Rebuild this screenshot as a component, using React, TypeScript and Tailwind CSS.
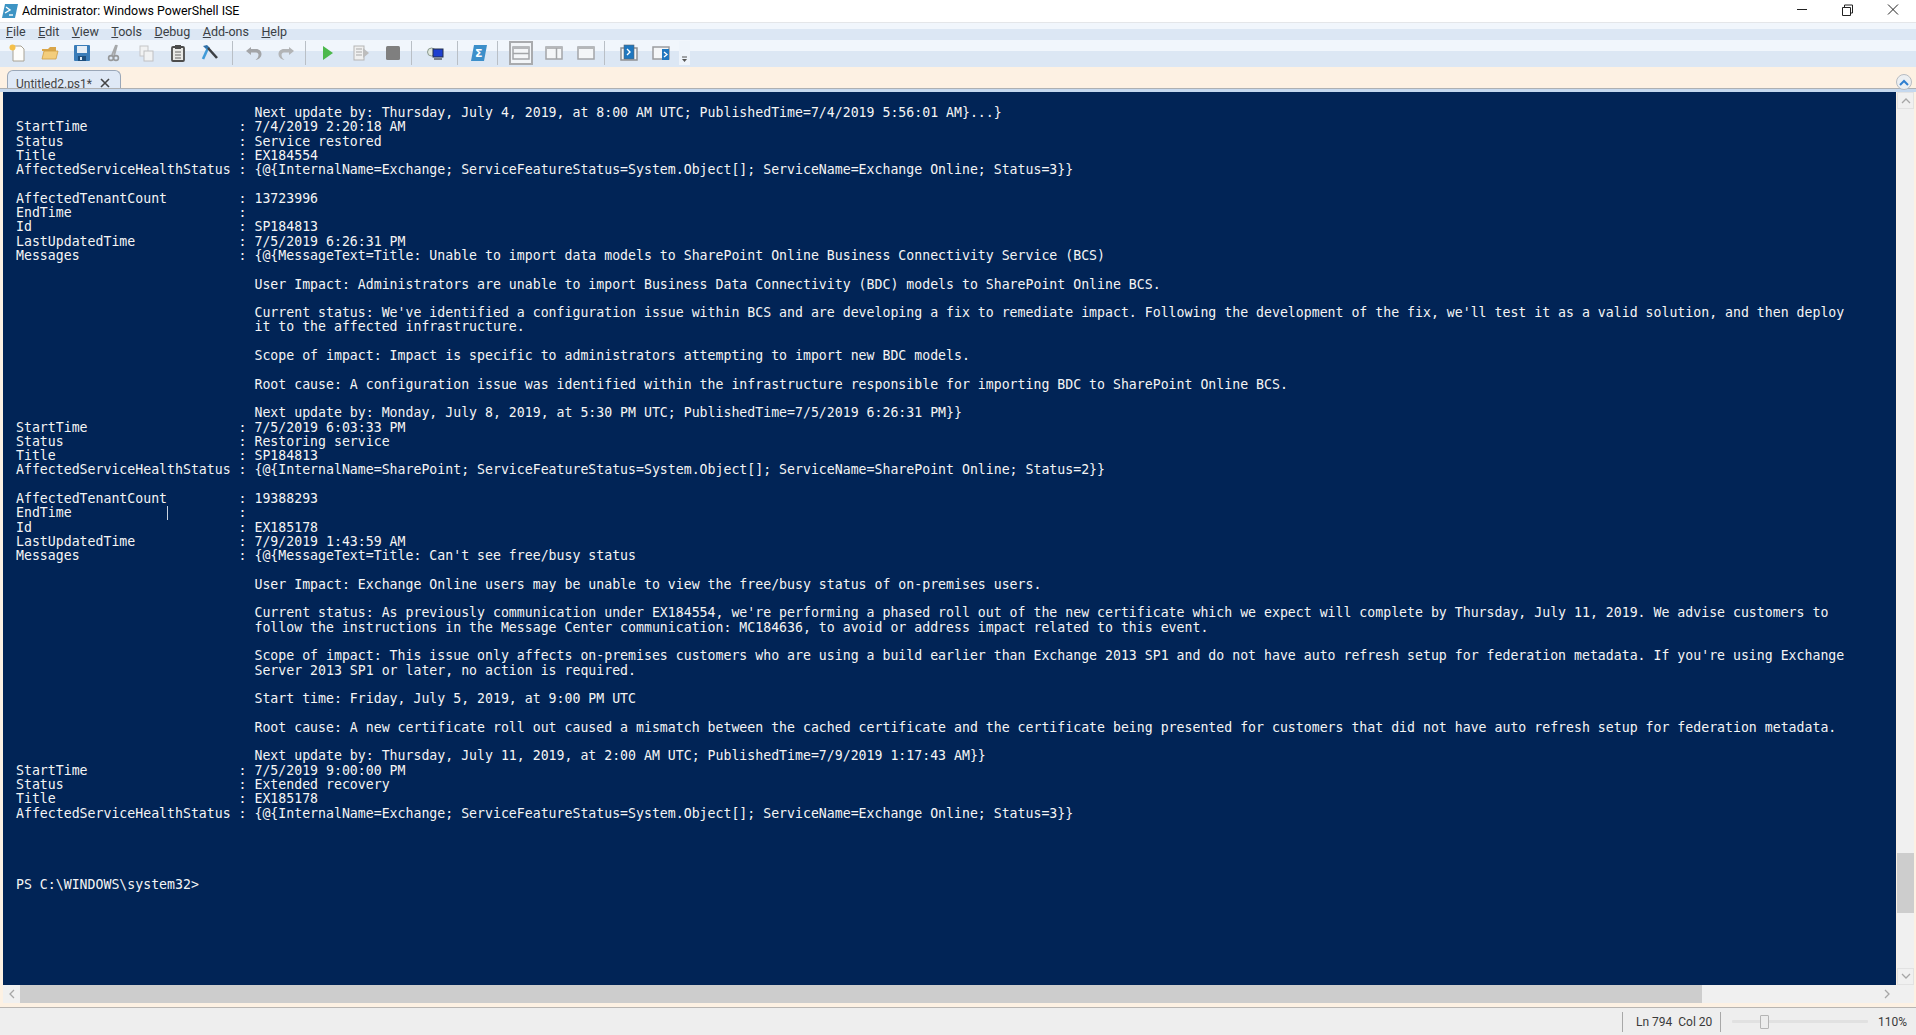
import React from "react";

const consoleText = `                              Next update by: Thursday, July 4, 2019, at 8:00 AM UTC; PublishedTime=7/4/2019 5:56:01 AM}...}
StartTime                   : 7/4/2019 2:20:18 AM
Status                      : Service restored
Title                       : EX184554
AffectedServiceHealthStatus : {@{InternalName=Exchange; ServiceFeatureStatus=System.Object[]; ServiceName=Exchange Online; Status=3}}

AffectedTenantCount         : 13723996
EndTime                     :
Id                          : SP184813
LastUpdatedTime             : 7/5/2019 6:26:31 PM
Messages                    : {@{MessageText=Title: Unable to import data models to SharePoint Online Business Connectivity Service (BCS)

                              User Impact: Administrators are unable to import Business Data Connectivity (BDC) models to SharePoint Online BCS.

                              Current status: We've identified a configuration issue within BCS and are developing a fix to remediate impact. Following the development of the fix, we'll test it as a valid solution, and then deploy
                              it to the affected infrastructure.

                              Scope of impact: Impact is specific to administrators attempting to import new BDC models.

                              Root cause: A configuration issue was identified within the infrastructure responsible for importing BDC to SharePoint Online BCS.

                              Next update by: Monday, July 8, 2019, at 5:30 PM UTC; PublishedTime=7/5/2019 6:26:31 PM}}
StartTime                   : 7/5/2019 6:03:33 PM
Status                      : Restoring service
Title                       : SP184813
AffectedServiceHealthStatus : {@{InternalName=SharePoint; ServiceFeatureStatus=System.Object[]; ServiceName=SharePoint Online; Status=2}}

AffectedTenantCount         : 19388293
EndTime                     :
Id                          : EX185178
LastUpdatedTime             : 7/9/2019 1:43:59 AM
Messages                    : {@{MessageText=Title: Can't see free/busy status

                              User Impact: Exchange Online users may be unable to view the free/busy status of on-premises users.

                              Current status: As previously communication under EX184554, we're performing a phased roll out of the new certificate which we expect will complete by Thursday, July 11, 2019. We advise customers to
                              follow the instructions in the Message Center communication: MC184636, to avoid or address impact related to this event.

                              Scope of impact: This issue only affects on-premises customers who are using a build earlier than Exchange 2013 SP1 and do not have auto refresh setup for federation metadata. If you're using Exchange
                              Server 2013 SP1 or later, no action is required.

                              Start time: Friday, July 5, 2019, at 9:00 PM UTC

                              Root cause: A new certificate roll out caused a mismatch between the cached certificate and the certificate being presented for customers that did not have auto refresh setup for federation metadata.

                              Next update by: Thursday, July 11, 2019, at 2:00 AM UTC; PublishedTime=7/9/2019 1:17:43 AM}}
StartTime                   : 7/5/2019 9:00:00 PM
Status                      : Extended recovery
Title                       : EX185178
AffectedServiceHealthStatus : {@{InternalName=Exchange; ServiceFeatureStatus=System.Object[]; ServiceName=Exchange Online; Status=3}}




PS C:\\WINDOWS\\system32>`;

const Slot = ({ w = 32, children }: { w?: number; children?: React.ReactNode }) => (
  <div className="flex h-full shrink-0 items-center justify-center" style={{ width: w }}>
    {children}
  </div>
);
const Sep = () => <div className="h-[24px] w-px shrink-0 bg-[#b9bfc6]" />;

const Ico = ({ children, size = 20 }: { children: React.ReactNode; size?: number }) => (
  <svg width={size} height={size} viewBox="0 0 20 20">{children}</svg>
);

const Win = ({ children }: { children?: React.ReactNode }) => (
  <Ico size={20}>
    <rect x="2" y="4" width="16" height="12" fill="#f4f6f8" stroke="#a3a5a8" strokeWidth="1.5" />
    <rect x="2" y="4" width="16" height="2" fill="#b5b7ba" />
    {children}
  </Ico>
);

function Toolbar() {
  return (
    <div className="flex h-[25px] items-center pl-[2px]">
      <Slot><Ico>
        <path d="M5 3h8l3 3v12H5z" fill="#fdfdfb" stroke="#a8a294" />
        <circle cx="4.5" cy="4.5" r="3" fill="#f5c04a" />
      </Ico></Slot>
      <Slot><Ico>
        <path d="M2 6h6l2-2h6v4H2z" fill="#d9a64a" />
        <path d="M2 16l2-8h14l-2 8z" fill="#f3cd7c" stroke="#cf9e45" strokeWidth="0.8" />
      </Ico></Slot>
      <Slot><Ico>
        <rect x="2" y="2" width="16" height="16" rx="1" fill="#3a7cb8" />
        <rect x="5" y="3" width="10" height="7" fill="#e6eef6" />
        <rect x="6" y="13" width="8" height="5" fill="#1d4f7e" />
        <rect x="8" y="14" width="2" height="3" fill="#dfe9f3" />
      </Ico></Slot>
      <Slot><Ico>
        <path d="M12 2L8 12M10 13l3-11" stroke="#a6a8aa" strokeWidth="1.8" fill="none" />
        <circle cx="7" cy="15" r="2.4" fill="none" stroke="#96989a" strokeWidth="1.6" />
        <circle cx="12" cy="15" r="2.4" fill="none" stroke="#96989a" strokeWidth="1.6" />
      </Ico></Slot>
      <Slot><Ico>
        <rect x="4" y="3" width="8" height="10" fill="#f1f2f3" stroke="#c5c6c8" />
        <rect x="8" y="8" width="9" height="10" fill="#f1f2f3" stroke="#bfc0c2" />
      </Ico></Slot>
      <Slot><Ico>
        <rect x="4" y="4" width="12" height="14" rx="1" fill="#e9e9e6" stroke="#4c4c4c" strokeWidth="1.8" />
        <rect x="7" y="2" width="6" height="4" fill="#4c4c4c" />
        <path d="M7 9h6M7 12h6M7 15h6" stroke="#666" />
      </Ico></Slot>
      <Slot><Ico>
        <path d="M3 3l4-1 3 3-3 2z" fill="#2f6fa8" />
        <path d="M8 5L3 16" stroke="#3f9ad8" strokeWidth="2.6" />
        <path d="M8 5l9 10" stroke="#3b3f44" strokeWidth="2.6" />
      </Ico></Slot>
      <div className="w-[4px]" />
      <Slot w={5}><Sep /></Slot>
      <div className="w-[3px]" />
      <Slot><Ico>
        <path d="M7 4L2 8l5 4V9.500h5c2 0 2.500 1.500 2.500 2.500 0 2-1.500 4-3 5 3.500-.5 6-3 6-6 0-2.500-2-5-5.500-5H7z" fill="#a3a5a8" />
      </Ico></Slot>
      <Slot><Ico>
        <path d="M13 4l5 4-5 4V9.500H8c-2 0-2.500 1.500-2.500 2.500 0 2 1.500 4 3 5-3.500-.5-6-3-6-6 0-2.500 2-5 5.500-5h5z" fill="#b2b4b6" />
      </Ico></Slot>
      <div className="w-[1px]" />
      <Slot w={5}><Sep /></Slot>
      <div className="w-[3px]" />
      <Slot w={33}><Ico><path d="M5 3l10 7-10 7z" fill="#4cb84c" /></Ico></Slot>
      <Slot w={33}><Ico>
        <rect x="3" y="3" width="10" height="14" fill="#f0f0f0" stroke="#b5b5b5" />
        <path d="M5 6h6M5 9h6M5 12h6" stroke="#a9a9a9" />
        <path d="M12 5l6 5-6 5z" fill="#bdbdbd" />
      </Ico></Slot>
      <Slot w={32}><Ico><rect x="3" y="3" width="14" height="14" rx="1.500" fill="#7f7f7f" /></Ico></Slot>
      <Slot w={5}><Sep /></Slot>
      <div className="w-[3px]" />
      <Slot w={35}><Ico>
        <circle cx="6.500" cy="9" r="4" fill="#dfe7dd" stroke="#8b9a90" />
        <rect x="8" y="6" width="10" height="8" fill="#1d3fd0" stroke="#22304d" />
        <path d="M9 16h8" stroke="#585f6a" strokeWidth="1.500" />
      </Ico></Slot>
      <div className="w-[3px]" />
      <Slot w={5}><Sep /></Slot>
      <div className="w-[3px]" />
      <Slot w={32}><Ico>
        <path d="M5 2h13l-3 16H2z" fill="#3c8fca" />
        <text x="6" y="14" fontSize="11" fontWeight="700" fill="#fff" fontFamily="DejaVu Sans">Σ</text>
      </Ico></Slot>
      <Slot w={5}><Sep /></Slot>
      <div className="w-[9px]" />
      <div className="flex h-[24px] w-[24px] shrink-0 items-center justify-center border-2 border-[#a9abae] bg-[#f2f5f8]">
        <Win><path d="M2 10.500h16" stroke="#a3a5a8" strokeWidth="1.500" /></Win>
      </div>
      <div className="w-[5px]" />
      <Slot w={32}><Win><path d="M12.500 5v11" stroke="#a3a5a8" strokeWidth="1.500" /></Win></Slot>
      <Slot w={32}><Win /></Slot>
      <Slot w={5}><Sep /></Slot>
      <div className="w-[5px]" />
      <Slot w={33}><Ico>
        <rect x="2" y="5" width="16" height="12" fill="#f4f6f8" stroke="#8f9194" strokeWidth="1.500" />
        <rect x="5" y="2" width="10" height="14" fill="#1f77bf" stroke="#5d6670" strokeWidth="0.600" />
        <path d="M8 6l3 3-3 3" stroke="#fff" strokeWidth="1.400" fill="none" />
      </Ico></Slot>
      <Slot w={32}><Ico>
        <rect x="2" y="4" width="16" height="12" fill="#f4f6f8" stroke="#9a9c9f" strokeWidth="1.500" />
        <rect x="11" y="6" width="7" height="11" fill="#1f77bf" />
        <path d="M13 9l3 2.500-3 2.500" stroke="#fff" strokeWidth="1.300" fill="none" />
      </Ico></Slot>
      <div className="w-[2px]" />
      <div className="flex h-[24px] w-[11px] shrink-0 items-end justify-center bg-[#eef4fb] pb-[2px]">
        <svg width="7" height="7" viewBox="0 0 7 7"><path d="M1 1h5" stroke="#555" /><path d="M1 3h5L3.500 6z" fill="#555" /></svg>
      </div>
    </div>
  );
}

export default function App() {
  return (
    <div className="flex h-[1035px] w-[1916px] flex-col overflow-hidden bg-white font-['Roboto','Open_Sans',sans-serif] text-black">
      {/* Title bar */}
      <div className="flex h-[22px] shrink-0 items-center bg-white pl-[2px]">
        <svg width="16" height="16" viewBox="0 0 16 16" className="mr-[4px]">
          <path d="M3 1h13l-3 14H0z" fill="#3d94c4" />
          <path d="M4 4l4 3-5 3" stroke="#fff" strokeWidth="1.400" fill="none" />
          <path d="M7 12h4" stroke="#fff" strokeWidth="1.400" />
        </svg>
        <span className="text-[12.400px] leading-none">Administrator: Windows PowerShell ISE</span>
        <div className="ml-auto flex h-full items-center">
          <svg width="46" height="22" viewBox="0 0 46 22" className="translate-x-[2px]"><path d="M18 9.500h10" stroke="#222" /></svg>
          <svg width="46" height="22" viewBox="0 0 46 22" className="mr-[1px]">
            <path d="M19.500 7.500h8v8h-8z M21.500 7.500v-2.500h8v8h-2" stroke="#222" fill="none" />
          </svg>
          <svg width="46" height="22" viewBox="0 0 46 22"><path d="M18 4.500l10 10M28 4.500l-10 10" stroke="#222" /></svg>
        </div>
      </div>

      {/* Menu */}
      <div className="flex h-[18px] shrink-0 items-center gap-[12.500px] border-t border-t-[#e4e6e9] bg-[linear-gradient(#f1f6fc_0,#f1f6fc_6px,#dce7f4_6px,#dce7f4_100%)] pl-[6px] pt-[2px] text-[12.500px] leading-none text-[#3a3f45]">
        <span><u className="decoration-[0.5px] underline-offset-1">F</u>ile</span>
        <span><u className="decoration-[0.5px] underline-offset-1">E</u>dit</span>
        <span><u className="decoration-[0.5px] underline-offset-1">V</u>iew</span>
        <span><u className="decoration-[0.5px] underline-offset-1">T</u>ools</span>
        <span><u className="decoration-[0.5px] underline-offset-1">D</u>ebug</span>
        <span><u className="decoration-[0.5px] underline-offset-1">A</u>dd-ons</span>
        <span><u className="decoration-[0.5px] underline-offset-1">H</u>elp</span>
      </div>

      {/* Toolbar */}
      <div className="flex h-[27px] shrink-0 flex-col bg-[linear-gradient(#f1f6fc_0,#f1f6fc_11px,#dce7f4_11px,#dce7f4_100%)]">
        <Toolbar />
      </div>

      {/* Tab strip */}
      <div className="relative flex h-[21px] shrink-0 items-end bg-[#fdf1e3] pl-[7px]">
        <div className="flex h-[18px] w-[114px] items-start gap-[8px] overflow-hidden rounded-t-[6px] border border-b-0 border-[#9aa7b8] bg-[#dfe9f6] pl-[8px] pt-[4px] text-[12px] leading-[18px] text-[#444]">
          <span>Untitled2.ps1*</span>
          <svg width="10" height="10" viewBox="0 0 10 10" className="mt-[3px] shrink-0"><path d="M1 1l8 8M9 1l-8 8" stroke="#444" strokeWidth="1.600" /></svg>
        </div>
        <div className="absolute bottom-[-2px] right-[4px] flex h-[16px] w-[16px] items-center justify-center rounded-full border border-[#b7bcc2] bg-[#eceff2]">
          <svg width="10" height="7" viewBox="0 0 10 7"><path d="M1 6l4-4 4 4" stroke="#2f7fd0" strokeWidth="2" fill="none" /></svg>
        </div>
      </div>

      {/* Editor + console */}
      <div className="flex min-h-0 flex-1 flex-col border-t border-t-[#aeb0b2] bg-[#fdf1e3]">
        <div className="h-[3px] shrink-0 bg-[#c5d8ee]" />
        <div className="flex h-[893px] shrink-0 pl-[3px] pr-[2px]">
          {/* console */}
          <div className="relative min-w-0 flex-1 overflow-hidden bg-[#012456] pl-[13px] pt-[14px]">
            <pre className="m-0 whitespace-pre font-['DejaVu_Sans_Mono','Liberation_Mono',monospace] text-[13.210px] leading-[14.290px] text-[#f5f5f5]">{consoleText}</pre>
            <div className="absolute left-[164px] top-[414px] h-[14px] w-px bg-[#c9d3e0]" />
          </div>
          {/* vertical scrollbar */}
          <div className="ml-px flex w-[17px] shrink-0 flex-col bg-[#f0f0f0]">
            <div className="flex h-[17px] shrink-0 items-center justify-center border border-[#e2e2e2]">
              <svg width="10" height="7" viewBox="0 0 10 7"><path d="M1 6l4-4 4 4" stroke="#a6a6a6" strokeWidth="1.300" fill="none" /></svg>
            </div>
            <div className="flex-1" />
            <div className="h-[60px] shrink-0 bg-[#cdcdcd]" />
            <div className="h-[55px] shrink-0" />
            <div className="flex h-[17px] shrink-0 items-center justify-center border border-[#e2e2e2]">
              <svg width="10" height="7" viewBox="0 0 10 7"><path d="M1 1l4 4 4-4" stroke="#a6a6a6" strokeWidth="1.300" fill="none" /></svg>
            </div>
          </div>
        </div>
        {/* horizontal scrollbar */}
        <div className="flex h-[18px] shrink-0 pl-[3px] pr-[2px]">
          <div className="flex flex-1 bg-[#f0f0f0]">
            <div className="flex w-[17px] shrink-0 items-center justify-center">
              <svg width="7" height="10" viewBox="0 0 7 10"><path d="M6 1L2 5l4 4" stroke="#a6a6a6" strokeWidth="1.300" fill="none" /></svg>
            </div>
            <div className="w-[1682px] shrink-0 bg-[#cdcdcd]" />
            <div className="flex-1" />
            <div className="flex w-[17px] shrink-0 items-center justify-center">
              <svg width="7" height="10" viewBox="0 0 7 10"><path d="M1 1l4 4-4 4" stroke="#a6a6a6" strokeWidth="1.300" fill="none" /></svg>
            </div>
          </div>
          <div className="w-[18px] shrink-0 bg-[#f0f0f0]" />
        </div>
      </div>

      {/* Status bar */}
      <div className="flex h-[28px] shrink-0 items-center border-t border-t-[#b8b5b2] bg-[#eeeeee] text-[12px] leading-none text-[#3a3a3a]">
        <div className="flex-1" />
        <div className="h-[20px] w-px bg-[#a8a8a8]" />
        <span className="w-[97px] whitespace-pre pl-[13px]">Ln 794  Col 20</span>
        <div className="h-[20px] w-px bg-[#a8a8a8]" />
        <div className="relative ml-[11px] flex h-[14px] w-[136px] items-center">
          <div className="h-[3px] w-full rounded-[1px] bg-[#e1e1e1]" />
          <div className="absolute left-[28px] top-0 h-[14px] w-[9px] rounded-[1px] border border-[#b4b4b4] bg-[#ececec]" />
        </div>
        <span className="ml-[10px] mr-[12px] w-[26px] whitespace-nowrap">110%</span>
      </div>
    </div>
  );
}
